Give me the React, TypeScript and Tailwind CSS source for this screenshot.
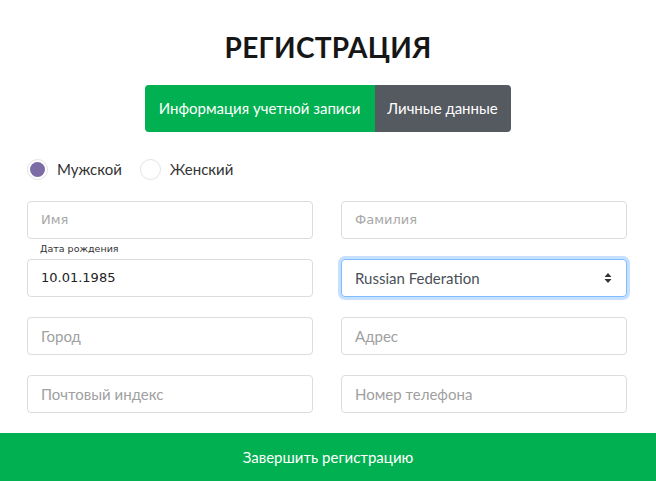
import React from "react";

const inputBase =
  "h-[38px] w-full rounded-[4px] border border-[#dcdcdc] bg-white px-[13px] flex items-center";

export default function App() {
  return (
    <div className="w-[656px] h-[481px] bg-white overflow-hidden flex flex-col" style={{ fontFamily: "Lato, 'Noto Sans', sans-serif" }}>
      <h1 className="mt-[30px] h-[34px] flex items-center justify-center text-[28px] font-bold tracking-[0.3px] text-[#161616]" style={{ fontFamily: "Lato, sans-serif" }}>
        РЕГИСТРАЦИЯ
      </h1>
      <div className="mt-[21px] flex justify-center">
        <div className="flex h-[47px] rounded-[4px] overflow-hidden ml-[-1px]">
          <div className="w-[230px] bg-[#01b050] text-white text-[15px] flex items-center justify-center">
            Информация учетной записи
          </div>
          <div className="w-[136px] bg-[#555960] text-white text-[15px] flex items-center justify-center">
            Личные данные
          </div>
        </div>
      </div>
      <div className="mt-[27px] ml-[27px] flex items-center h-[21px]">
        <div className="w-[21px] h-[21px] rounded-full border border-[#e2e2e2] flex items-center justify-center">
          <div className="w-[15px] h-[15px] rounded-full bg-[#7c6ca6]" />
        </div>
        <span className="ml-[9px] text-[15px] text-[#333]">Мужской</span>
        <div className="ml-[18px] w-[21px] h-[21px] rounded-full border border-[#e2e2e2]" />
        <span className="ml-[9px] text-[15px] text-[#333]">Женский</span>
      </div>
      <div className="mt-[21px] mx-[27px] w-[600px] grid grid-cols-2 gap-x-[28px]">
        <div className={inputBase}>
          <span className="text-[13px] text-[#a8a8a8]" style={{ fontFamily: "'DejaVu Sans', sans-serif" }}>Имя</span>
        </div>
        <div className={inputBase}>
          <span className="text-[13px] text-[#a8a8a8]" style={{ fontFamily: "'DejaVu Sans', sans-serif" }}>Фамилия</span>
        </div>
        <div className="col-span-2 h-[20px] flex items-center pl-[13px]">
          <span className="text-[9.5px] text-[#333]" style={{ fontFamily: "'DejaVu Sans', sans-serif" }}>Дата рождения</span>
        </div>
        <div className={inputBase}>
          <span className="text-[13px] text-[#222]" style={{ fontFamily: "'DejaVu Sans', sans-serif" }}>10.01.1985</span>
        </div>
        <div className="h-[38px] w-full rounded-[4px] border border-[#80bdff] shadow-[0_0_0_3px_rgba(128,189,255,0.45)] bg-white px-[13px] flex items-center justify-between">
          <span className="text-[15px] text-[#495057]">Russian Federation</span>
          <svg width="8" height="12" viewBox="0 0 8 12" className="mr-[1px]">
            <path d="M4 1 L7.5 5 H0.5 Z" fill="#333" />
            <path d="M4 11 L7.5 7 H0.5 Z" fill="#333" />
          </svg>
        </div>
        <div className={`${inputBase} mt-[20px]`}>
          <span className="text-[15px] text-[#a0a0a0]">Город</span>
        </div>
        <div className={`${inputBase} mt-[20px]`}>
          <span className="text-[15px] text-[#a0a0a0]">Адрес</span>
        </div>
        <div className={`${inputBase} mt-[20px]`}>
          <span className="text-[15px] text-[#a0a0a0]">Почтовый индекс</span>
        </div>
        <div className={`${inputBase} mt-[20px]`}>
          <span className="text-[15px] text-[#a0a0a0]">Номер телефона</span>
        </div>
      </div>
      <div className="mt-[20px] h-[48px] bg-[#01b050] flex items-center justify-center text-white text-[15px]">
        Завершить регистрацию
      </div>
    </div>
  );
}
